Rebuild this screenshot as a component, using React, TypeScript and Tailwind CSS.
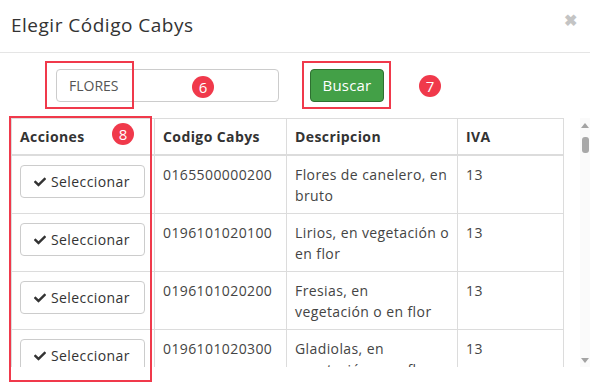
import React from "react";
import { FaCheck } from "react-icons/fa";

const rows = [
  { code: "0165500000200", desc: ["Flores de canelero, en", "bruto"], iva: "13" },
  { code: "0196101020100", desc: ["Lirios, en vegetación o", "en flor"], iva: "13" },
  { code: "0196101020200", desc: ["Fresias, en", "vegetación o en flor"], iva: "13" },
  { code: "0196101020300", desc: ["Gladiolas, en", "vegetación o en flor"], iva: "13" },
];

function Badge({ n }: { n: string }) {
  return (
    <div className="w-[22px] h-[22px] rounded-full bg-[#f0394b] text-white text-[15px] leading-none flex items-center justify-center">
      {n}
    </div>
  );
}

export default function App() {
  return (
    <div
      className="relative w-[590px] h-[390px] bg-white overflow-hidden text-[#333]"
      style={{ fontFamily: '"Open Sans", sans-serif' }}
    >
      {/* header */}
      <div className="h-[53px] border-b border-[#e5e5e5] flex items-center justify-between pl-[11px] pr-[13px]">
        <div className="text-[19px] tracking-[0.5px] text-[#333] pb-[2px]">Elegir Código Cabys</div>
        <div className="text-[#c4c4c4] text-[16px] font-bold leading-none mb-[12px]">✖</div>
      </div>

      {/* search row */}
      <div className="flex items-center pt-[16px] pl-[56px] h-[49px]">
        <div className="w-[223px] h-[33px] border border-[#ccc] rounded-[4px] flex items-center pl-[12px] text-[14px] text-[#555]">
          FLORES
        </div>
        <div className="ml-[31px] w-[74px] h-[33px] rounded-[4px] bg-[#43a047] border border-[#2e6f31] text-white text-[15px] tracking-[0.2px] flex items-center justify-center">
          Buscar
        </div>
      </div>

      {/* table area */}
      <div className="flex mt-[16px] pl-[11px] h-[249px]">
        <div className="w-[569px] h-full overflow-hidden">
          <table className="w-[552px] border-collapse table-fixed text-[14px] leading-[21px] tracking-[0.4px]">
            <colgroup>
              <col className="w-[143px]" />
              <col className="w-[132px]" />
              <col className="w-[171px]" />
              <col className="w-[106px]" />
            </colgroup>
            <thead>
              <tr>
                {["Acciones", "Codigo Cabys", "Descripcion", "IVA"].map((h) => (
                  <th
                    key={h}
                    className="border border-[#dcdcdc] border-b-2 text-left font-bold px-[8px] py-[7px] text-[#333]"
                  >
                    {h}
                  </th>
                ))}
              </tr>
            </thead>
            <tbody>
              {rows.map((r) => (
                <tr key={r.code}>
                  <td className="border border-[#dcdcdc] px-[8px] py-[7.5px] align-top">
                    <div className="mt-[1.5px] w-[125px] h-[33px] border border-[#ccc] rounded-[4px] flex items-center gap-[5px] pl-[13px] text-[14px] text-[#333]">
                      <FaCheck className="w-[12px] h-[12px] shrink-0" />
                      <span>Seleccionar</span>
                    </div>
                  </td>
                  <td className="border border-[#dcdcdc] px-[8px] py-[7.5px] align-top text-[#444]">{r.code}</td>
                  <td className="border border-[#dcdcdc] px-[8px] py-[7.5px] align-top text-[#444]">
                    <div className="whitespace-nowrap">{r.desc[0]}</div>
                    <div className="whitespace-nowrap">{r.desc[1]}</div>
                  </td>
                  <td className="border border-[#dcdcdc] px-[8px] py-[7.5px] align-top text-[#444]">{r.iva}</td>
                </tr>
              ))}
            </tbody>
          </table>
        </div>
        {/* scrollbar */}
        <div className="w-[10px] h-full bg-[#fafafa] flex flex-col items-center">
          <div className="mt-[5px] w-0 h-0 border-l-[4px] border-r-[4px] border-b-[5px] border-l-transparent border-r-transparent border-b-[#a3a3a3]" />
          <div className="mt-[9px] w-[7px] h-[16px] rounded-[3px] bg-[#a8a8a8]" />
          <div className="flex-1" />
          <div className="mb-[4px] w-0 h-0 border-l-[4px] border-r-[4px] border-t-[5px] border-l-transparent border-r-transparent border-t-[#a3a3a3]" />
        </div>
      </div>

      {/* annotations */}
      <div className="absolute left-[45px] top-[61px] w-[89px] h-[48px] border-2 border-[#f0394b]" />
      <div className="absolute left-[192px] top-[76px]"><Badge n="6" /></div>
      <div className="absolute left-[302px] top-[61px] w-[89px] h-[48px] border-2 border-[#f0394b]" />
      <div className="absolute left-[419px] top-[75px]"><Badge n="7" /></div>
      <div className="absolute left-[9px] top-[116px] w-[143px] h-[266px] border-2 border-[#f0394b]" />
      <div className="absolute left-[112px] top-[123px]"><Badge n="8" /></div>
    </div>
  );
}
